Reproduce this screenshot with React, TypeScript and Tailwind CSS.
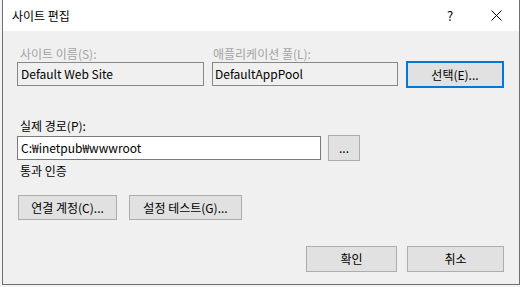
import React from "react";

const font = "font-['Noto_Sans_CJK_KR','Noto_Sans',sans-serif]";

function Btn({ w, h, children, focused }: { w: string; h: string; children: React.ReactNode; focused?: boolean }) {
  return (
    <div
      className={`${w} ${h} flex items-center justify-center bg-[#e1e1e1] text-[12px] text-black ${
        focused ? "border-2 border-[#0078d7]" : "border border-[#adadad]"
      }`}
    >
      {children}
    </div>
  );
}

export default function App() {
  return (
    <div className={`w-[520px] h-[287px] bg-[#f4f4f4] overflow-hidden ${font}`}>
      <div className="ml-[2px] w-[518px] h-[285px] border-x border-b border-[#6f6f6f] flex flex-col bg-[#f0f0f0]">
        {/* title bar */}
        <div className="h-[31px] bg-white flex items-center shrink-0">
          <div className="pl-[9px] text-[12px] leading-[16px] text-black">사이트 편집</div>
          <div className="ml-auto flex h-full">
            <div className="w-[46px] h-full flex items-center justify-center text-[13px] text-black">?</div>
            <div className="w-[46px] h-full flex items-center justify-center">
              <svg width="11" height="11" viewBox="0 0 11 11">
                <path d="M0.5 0.5 L10.5 10.5 M10.5 0.5 L0.5 10.5" stroke="#000" strokeWidth="1" fill="none" />
              </svg>
            </div>
          </div>
        </div>

        {/* content */}
        <div className="flex-1 flex flex-col pl-[14px] pr-[15px] text-[12px]">
          {/* row 1 */}
          <div className="flex items-start mt-[15px]">
            <div className="flex flex-col w-[187px]">
              <div className="h-[16px] leading-[16px] pl-[3px] text-[#a3a3a3]">사이트 이름(S):</div>
              <div className="h-[24px] border border-[#878787] bg-[#f0f0f0] flex items-center pl-[3px] text-black">
                Default Web Site
              </div>
            </div>
            <div className="flex flex-col w-[186px] ml-[8px]">
              <div className="h-[16px] leading-[16px] pl-[1px] text-[#a3a3a3]">애플리케이션 풀(L):</div>
              <div className="h-[24px] border border-[#878787] bg-[#f0f0f0] flex items-center pl-[2px] text-black">
                DefaultAppPool
              </div>
            </div>
            <div className="ml-[8px] mt-[15px]">
              <Btn w="w-[98px]" h="h-[27px]" focused>
                선택(E)...
              </Btn>
            </div>
          </div>

          {/* row 2 */}
          <div className="mt-[30px] h-[16px] leading-[16px] pl-[3px] text-black">실제 경로(P):</div>
          <div className="mt-[1px] flex items-center h-[26px]">
            <div className="w-[304px] h-[24px] border border-[#7a7a7a] bg-white flex items-center pl-[3px] text-black">
              C:₩inetpub₩wwwroot
            </div>
            <div className="ml-[7px]">
              <Btn w="w-[32px]" h="h-[26px]">...</Btn>
            </div>
          </div>

          <div className="mt-[2px] h-[16px] leading-[16px] pl-[3px] text-black">통과 인증</div>

          <div className="mt-[16px] flex pl-[1px]">
            <Btn w="w-[99px]" h="h-[25px]">연결 계정(C)...</Btn>
            <div className="ml-[12px]">
              <Btn w="w-[113px]" h="h-[25px]">설정 테스트(G)...</Btn>
            </div>
          </div>

          <div className="mt-[26px] flex justify-end">
            <Btn w="w-[91px]" h="h-[26px]">확인</Btn>
            <div className="ml-[10px]">
              <Btn w="w-[97px]" h="h-[26px]">취소</Btn>
            </div>
          </div>
        </div>
      </div>
    </div>
  );
}
